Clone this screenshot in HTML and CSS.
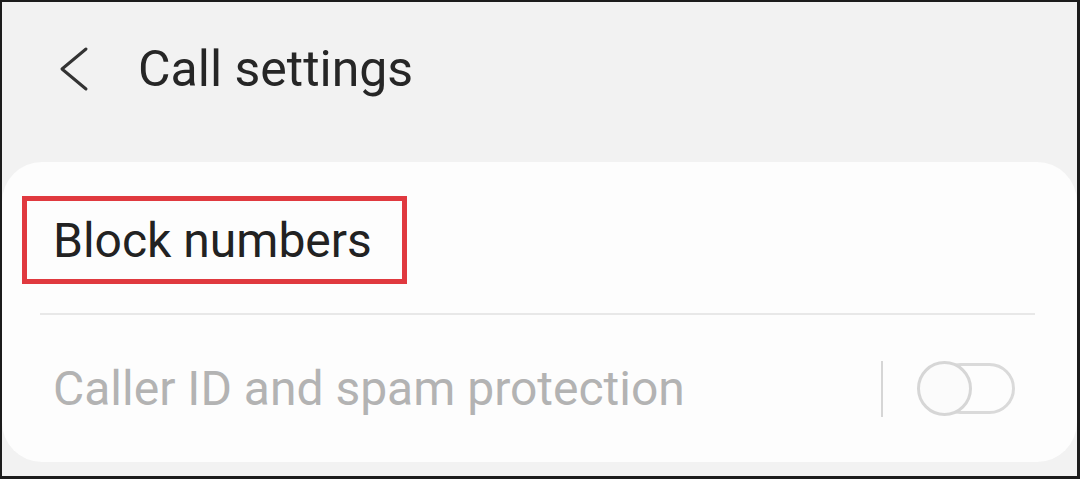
FILE: index.html
```html
<!DOCTYPE html>
<html lang="en">
<head>
  <meta charset="UTF-8">
  <title>Call settings</title>
  <link rel="stylesheet" href="styles.css">
</head>
<body>

<div class="frame">
  <div class="header">
    <svg class="back" width="32" height="46" viewBox="0 0 32 46">
      <polyline points="28,3 4,23 28,43" fill="none" stroke="#333" stroke-width="3" stroke-linecap="round" stroke-linejoin="round"/>
    </svg>
    <h1 class="title">Call settings</h1>
  </div>

  <div class="card">
    <div class="block-row">
      <div class="highlight">Block numbers</div>
    </div>

    <div class="divider"></div>

    <div class="caller-row">
      <span class="caller-label">Caller ID and spam protection</span>
      <div class="switch-area">
        <span class="sep"></span>
        <span class="toggle"><span class="thumb"></span></span>
      </div>
    </div>
  </div>
</div>

</body>
</html>
```

FILE: styles.css
```css
body {
  margin: 0;
  font-family: Roboto, "Noto Sans", sans-serif;
}
.frame {
  width: 1080px;
  height: 479px;
  box-sizing: border-box;
  border: 2px solid #1c1c1c;
  border-right-width: 3px;
  border-bottom-width: 3px;
  background: #f2f2f2;
  display: flex;
  flex-direction: column;
  overflow: hidden;
}
.header {
  height: 160px;
  display: flex;
  align-items: center;
  padding-left: 56px;
  padding-bottom: 26px;
  box-sizing: border-box;
}
.back {
  margin-right: 48px;
}
.title {
  margin: 0;
  font-size: 50px;
  font-weight: 400;
  color: #262626;
}
.card {
  background: #fdfdfd;
  border-radius: 40px;
  height: 300px;
  display: flex;
  flex-direction: column;
}
.block-row {
  padding: 34px 0 0 20px;
}
.highlight {
  width: 385px;
  height: 88px;
  box-sizing: border-box;
  border: 5px solid #e0393f;
  display: flex;
  align-items: center;
  padding-left: 26px;
  font-size: 48px;
  color: #222;
}
.divider {
  margin: 29px 42px 0 38px;
  height: 2px;
  background: #e8e8e8;
}
.caller-row {
  flex: 1;
  display: flex;
  align-items: center;
  justify-content: space-between;
  padding: 0 62px 0 51px;
}
.caller-label {
  font-size: 48px;
  color: #b3b3b3;
}
.switch-area {
  display: flex;
  align-items: center;
}
.sep {
  width: 2px;
  height: 56px;
  background: #d6d6d6;
  margin-right: 34px;
}
.toggle {
  position: relative;
  width: 98px;
  height: 55px;
  display: block;
}
.toggle::before {
  content: "";
  position: absolute;
  left: 18px;
  right: 0;
  top: 2px;
  bottom: 2px;
  border: 3px solid #dadada;
  border-radius: 30px;
}
.thumb {
  position: absolute;
  left: 0;
  top: 0;
  width: 55px;
  height: 55px;
  box-sizing: border-box;
  border: 3px solid #d6d6d6;
  border-radius: 50%;
  background: #fbfbfb;
}
```
